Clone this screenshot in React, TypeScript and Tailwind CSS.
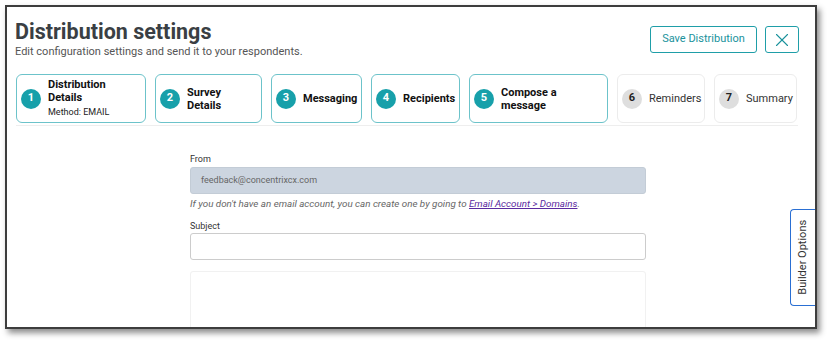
import { X } from "lucide-react";

type Step = {
  num: number;
  lines: string[];
  sub?: string;
  width: string;
  active: boolean;
};

const STEPS: Step[] = [
  { num: 1, lines: ["Distribution", "Details"], sub: "Method: EMAIL", width: "w-[130px]", active: true },
  { num: 2, lines: ["Survey", "Details"], width: "w-[107px]", active: true },
  { num: 3, lines: ["Messaging"], width: "w-[91px]", active: true },
  { num: 4, lines: ["Recipients"], width: "w-[89px]", active: true },
  { num: 5, lines: ["Compose a", "message"], width: "w-[139px]", active: true },
  { num: 6, lines: ["Reminders"], width: "w-[88px]", active: false },
  { num: 7, lines: ["Summary"], width: "w-[83px]", active: false },
];

function StepCard({ step }: { step: Step }) {
  return (
    <div
      className={`flex h-[49px] shrink-0 items-center gap-[7px] rounded-[6px] border pl-[4px] ${step.width} ${
        step.active ? "border-[#6cc3ca]" : "border-[#ececec]"
      }`}
    >
      <span
        className={`flex h-[20px] w-[20px] shrink-0 items-center justify-center rounded-full text-[11px] font-bold ${
          step.active ? "bg-[#17a0aa] text-white" : "bg-[#dedede] text-[#222]"
        }`}
      >
        {step.num}
      </span>
      <div className="flex flex-col">
        {step.lines.map((l) => (
          <span
            key={l}
            className={`text-[11px] leading-[13px] ${
              step.active ? "font-bold text-[#111]" : "font-normal text-[#333]"
            }`}
          >
            {l}
          </span>
        ))}
        {step.sub && <span className="mt-[2px] text-[9px] leading-[13px] text-[#222]">{step.sub}</span>}
      </div>
    </div>
  );
}

export default function App() {
  return (
    <div className="h-[342px] w-[830px] bg-white pl-[5px] pt-[5px] font-['Roboto',sans-serif]">
      <div className="relative h-[324px] w-[812px] overflow-hidden border-2 border-[#3d3d3d] bg-white shadow-[3px_4px_6px_rgba(0,0,0,0.45)]">
        <div className="flex items-start justify-between pl-[8px] pr-[16px] pt-[12px]">
          <div>
            <h1 className="text-[21.5px] font-bold leading-[25px] text-[#3a3f44]">Distribution settings</h1>
            <p className="mt-[1px] text-[11px] leading-[14px] text-[#555]">
              Edit configuration settings and send it to your respondents.
            </p>
          </div>
          <div className="mt-[7px] flex gap-[8px]">
            <button
              type="button"
              className="h-[27px] w-[107px] rounded-[3px] border border-[#1f9ea8] text-[11px] text-[#1a929c]"
            >
              Save Distribution
            </button>
            <button
              type="button"
              className="flex h-[27px] w-[34px] items-center justify-center rounded-[3px] border border-[#1f9ea8] text-[#1a929c]"
            >
              <X size={22} strokeWidth={1.2} />
            </button>
          </div>
        </div>

        <div className="ml-[9px] mt-[15px] w-[782px]">
          <div className="flex gap-[9px]">
            {STEPS.map((s) => (
              <StepCard key={s.num} step={s} />
            ))}
          </div>
          <div className="mt-[2px] h-px bg-[#eeeeee]" />
        </div>

        <div className="ml-[183px] mt-[27px] w-[456px]">
          <label className="block text-[9px] leading-[12px] text-[#333]">From</label>
          <div className="mt-[2px] flex h-[27px] items-center rounded-[3px] border border-[#c3ccd6] bg-[#ccd5e0] pl-[10px] text-[9px] text-[#666]">
            feedback@concentrixcx.com
          </div>
          <p className="mt-[4px] text-[9.8px] italic leading-[12px] text-[#666]">
            If you don't have an email account, you can create one by going to{" "}
            <a className="text-[#5a2aa0] underline">Email Account &gt; Domains</a>.
          </p>
          <label className="mt-[10px] block text-[9px] leading-[12px] text-[#333]">Subject</label>
          <div className="mt-[1px] h-[27px] rounded-[3px] border border-[#cccccc] bg-white" />
          <div className="mt-[11px] h-[80px] rounded-[3px] border border-[#f1f1f1]" />
        </div>

        <div className="absolute right-0 top-[202px] flex h-[97px] w-[25px] items-center justify-center rounded-l-[4px] border-[1.5px] border-r-0 border-[#2a6fd3] bg-white">
          <span className="-rotate-90 whitespace-nowrap text-[11px] text-[#333]">Builder Options</span>
        </div>
      </div>
    </div>
  );
}
